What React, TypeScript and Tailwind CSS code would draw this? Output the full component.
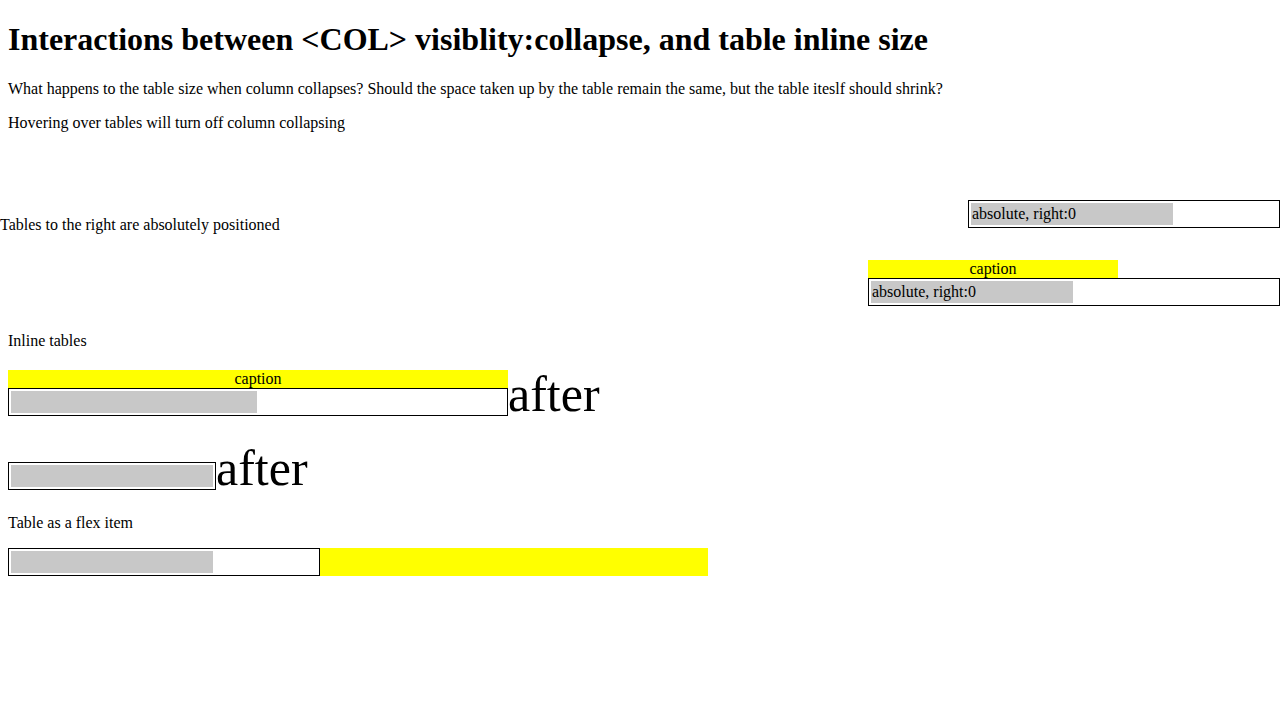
import React from "react";

function Cell({ w, text }: { w: number; text?: string }) {
  return (
    <div
      className="h-[22px] bg-[#c8c8c8] px-[1px] leading-[22px] whitespace-nowrap"
      style={{ width: w }}
    >
      {text}
    </div>
  );
}

export default function App() {
  return (
    <div className="relative min-h-screen bg-white text-black font-['Liberation_Serif',serif] text-[16px]">
      {/* absolutely positioned tables (content of the test) */}
      <div className="absolute right-0 top-[200px] w-[312px] h-[28px] border border-black p-[2px]">
        <Cell w={202} text="absolute, right:0" />
      </div>
      <div className="absolute right-0 top-[260px] w-[412px] flex flex-col">
        <div className="w-[250px] h-[18px] bg-[#ffff00] text-center leading-[18px]">caption</div>
        <div className="h-[28px] border border-black p-[2px]">
          <Cell w={202} text="absolute, right:0" />
        </div>
      </div>

      <div className="flex flex-col">
        <h1 className="mx-2 mt-[21px] text-[32px] font-bold leading-[37px] whitespace-nowrap">
          Interactions between &lt;COL&gt; visiblity:collapse, and table inline size
        </h1>
        <p className="mx-2 mt-[21px] leading-[20px]">
          What happens to the table size when column collapses? Should the space taken up by the table remain the same, but the table iteslf should shrink?
        </p>
        <p className="mx-2 mt-[14px] leading-[20px]">Hovering over tables will turn off column collapsing</p>

        <p className="mt-[82px] leading-[20px]">Tables to the right are absolutely positioned</p>

        <p className="mx-2 mt-[96px] leading-[20px]">Inline tables</p>

        <div className="mx-2 mt-[18px] flex items-end">
          <div className="flex flex-col w-[500px]">
            <div className="h-[18px] bg-[#ffff00] text-center leading-[18px]">caption</div>
            <div className="h-[28px] border border-black p-[2px]">
              <Cell w={246} />
            </div>
          </div>
          <span className="text-[50px] leading-none mb-[-3px]">after</span>
        </div>

        <div className="mx-2 mt-[27px] flex items-end">
          <div className="w-[208px] h-[28px] border border-black p-[2px]">
            <Cell w={202} />
          </div>
          <span className="text-[50px] leading-none mb-[-3px]">after</span>
        </div>

        <p className="mx-2 mt-[23px] leading-[20px]">Table as a flex item</p>

        <div className="mx-2 mt-[15px] flex w-[700px]">
          <div className="w-[312px] h-[28px] border border-black p-[2px]">
            <Cell w={202} />
          </div>
          <div className="w-[388px] h-[28px] bg-[#ffff00]" />
        </div>
      </div>
    </div>
  );
}
